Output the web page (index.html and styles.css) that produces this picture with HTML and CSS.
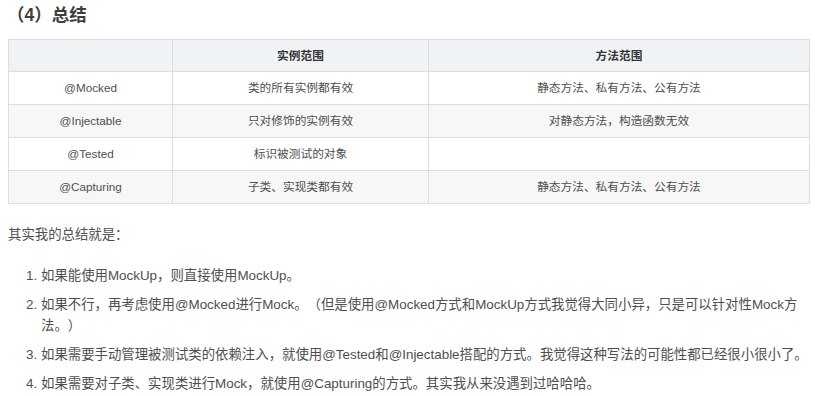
FILE: index.html
```html
<!DOCTYPE html>
<html lang="zh">
<head>
<meta charset="utf-8">
<link rel="stylesheet" href="styles.css">
</head>
<body>
<h4 class="title">（4）总结</h4>
<table class="summary">
  <colgroup>
    <col class="c1"><col class="c2"><col class="c3">
  </colgroup>
  <thead>
    <tr><th></th><th>实例范围</th><th>方法范围</th></tr>
  </thead>
  <tbody>
    <tr><td>@Mocked</td><td>类的所有实例都有效</td><td>静态方法、私有方法、公有方法</td></tr>
    <tr><td>@Injectable</td><td>只对修饰的实例有效</td><td>对静态方法，构造函数无效</td></tr>
    <tr><td>@Tested</td><td>标识被测试的对象</td><td></td></tr>
    <tr><td>@Capturing</td><td>子类、实现类都有效</td><td>静态方法、私有方法、公有方法</td></tr>
  </tbody>
</table>
<p class="lead">其实我的总结就是：</p>
<ol class="points">
  <li>如果能使用MockUp，则直接使用MockUp。</li>
  <li>如果不行，再考虑使用@Mocked进行Mock。（但是使用@Mocked方式和MockUp方式我觉得大同小异，只是可以针对性Mock方法。）</li>
  <li>如果需要手动管理被测试类的依赖注入，就使用@Tested和@Injectable搭配的方式。我觉得这种写法的可能性都已经很小很小了。</li>
  <li>如果需要对子类、实现类进行Mock，就使用@Capturing的方式。其实我从来没遇到过哈哈哈。</li>
</ol>
</body>
</html>
```

FILE: styles.css
```css
html {
  overflow: hidden;
}
body {
  margin: 0 0 0 8px;
  background: #fff;
  color: #4f4f4f;
  font-family: "Liberation Sans", Arial, "Noto Sans CJK SC", sans-serif;
  text-spacing-trim: space-all;
}
.title {
  margin: 2px 0 0 0;
  font-size: 17.5px;
  line-height: 26px;
  font-weight: bold;
  color: #3f3f3f;
  text-indent: -1px;
}
.summary {
  margin-top: 11px;
  width: 801px;
  border-collapse: collapse;
  table-layout: fixed;
  font-size: 11.7px;
  color: #4f4f4f;
}
.c1 { width: 164px; }
.c2 { width: 256px; }
.c3 { width: 381px; }
.summary th, .summary td {
  border: 1px solid #dddddd;
  text-align: center;
  padding: 0 8px;
  height: 32px;
  line-height: 18px;
}
.summary th {
  background: #eff3f5;
  font-weight: bold;
  color: #333;
  height: 31px;
}
.summary tbody tr:nth-child(even) td {
  background: #f7f7f7;
}
.lead {
  margin: 20px 0 0 0;
  font-size: 13.4px;
  line-height: 22px;
}
.points {
  margin: 19px 0 0 0;
  padding-left: 33px;
  font-size: 13.4px;
  line-height: 21px;
}
.points li {
  margin-bottom: 8px;
}
```
